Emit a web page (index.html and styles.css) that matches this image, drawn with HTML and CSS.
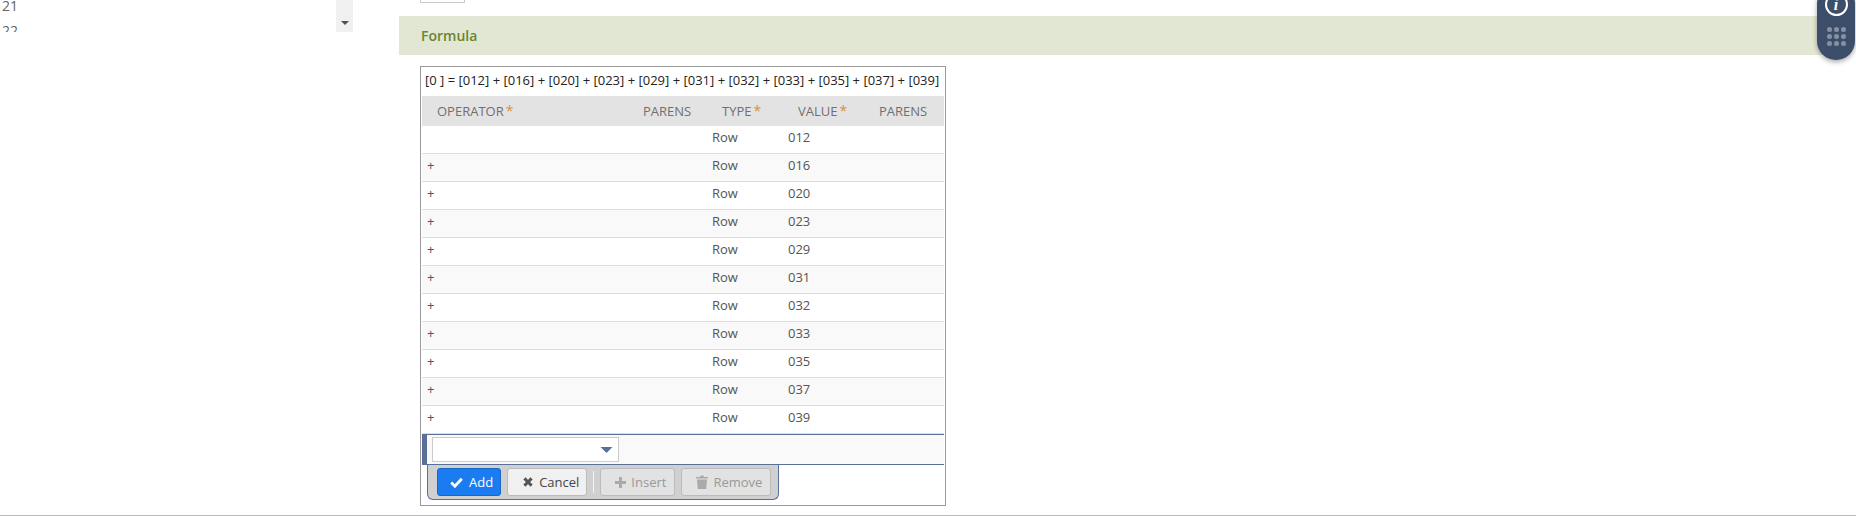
FILE: index.html
```html
<!DOCTYPE html>
<html lang="en">
<head>
<meta charset="utf-8">
<title>Formula</title>
<link rel="stylesheet" href="styles.css">
</head>
<body>
<div class="page">
  <aside class="side">
    <div class="lines">
      <div class="line-list"><div>21</div><div>22</div></div>
      <div class="scrollbar"><span class="scroll-arrow"></span></div>
    </div>
  </aside>
  <main class="main">
    <div class="stub"></div>
    <h2 class="section">Formula</h2>
    <div class="box">
      <div class="expr">[0 ] = [012] + [016] + [020] + [023] + [029] + [031] + [032] + [033] + [035] + [037] + [039]</div>
      <div class="row head">
        <div>OPERATOR<span class="req">*</span></div>
        <div>PARENS</div>
        <div>TYPE<span class="req">*</span></div>
        <div>VALUE<span class="req">*</span></div>
        <div>PARENS</div>
      </div>
      <div class="row"><div></div><div></div><div>Row</div><div>012</div><div></div></div>
      <div class="row"><div>+</div><div></div><div>Row</div><div>016</div><div></div></div>
      <div class="row"><div>+</div><div></div><div>Row</div><div>020</div><div></div></div>
      <div class="row"><div>+</div><div></div><div>Row</div><div>023</div><div></div></div>
      <div class="row"><div>+</div><div></div><div>Row</div><div>029</div><div></div></div>
      <div class="row"><div>+</div><div></div><div>Row</div><div>031</div><div></div></div>
      <div class="row"><div>+</div><div></div><div>Row</div><div>032</div><div></div></div>
      <div class="row"><div>+</div><div></div><div>Row</div><div>033</div><div></div></div>
      <div class="row"><div>+</div><div></div><div>Row</div><div>035</div><div></div></div>
      <div class="row"><div>+</div><div></div><div>Row</div><div>037</div><div></div></div>
      <div class="row"><div>+</div><div></div><div>Row</div><div>039</div><div></div></div>
      <div class="edit">
        <div class="select"><svg class="caret" width="13" height="6" viewBox="0 0 13 6"><path d="M0.5 0H12.5L7 5.6Q6.5 6 6 5.6Z"/></svg></div>
      </div>
      <div class="toolbar">
        <button class="btn primary">
          <svg class="ico" width="13" height="11" viewBox="0 0 13 11"><path d="M1.2 5.6L4.9 9.2L11.8 1.8" fill="none" stroke="currentColor" stroke-width="2.8"/></svg>
          <span>Add</span>
        </button>
        <button class="btn">
          <svg class="ico" width="10" height="10" viewBox="0 0 10 10"><path d="M1.4 1.4L8.6 8.6M8.6 1.4L1.4 8.6" fill="none" stroke="#555" stroke-width="2.9"/></svg>
          <span>Cancel</span>
        </button>
        <span class="sep"></span>
        <button class="btn off">
          <svg class="ico" width="11" height="11" viewBox="0 0 11 11"><path d="M5.5 0V11M0 5.5H11" fill="none" stroke="#aaa" stroke-width="3"/></svg>
          <span>Insert</span>
        </button>
        <button class="btn off">
          <svg class="ico" width="12" height="14" viewBox="0 0 12 14"><path d="M0 2H4L4.6 0.5H7.4L8 2H12V3.4H0ZM1 4.4H11L10.2 14H1.8Z" fill="#aaa"/></svg>
          <span>Remove</span>
        </button>
      </div>
    </div>
  </main>
</div>
<div class="widget">
  <div class="info"><span class="info-i">i</span></div>
  <div class="dots"><i></i><i></i><i></i><i></i><i></i><i></i><i></i><i></i><i></i></div>
</div>
</body>
</html>
```
FILE: styles.css
```css
html, body {
  margin: 0;
  padding: 0;
  background: #fff;
}
body {
  height: 516px;
  overflow: hidden;
  font-family: "Open Sans", sans-serif;
  font-size: 13px;
  color: #555;
}
.page {
  display: flex;
  height: 515px;
  border-bottom: 1px solid #bbb;
  overflow: hidden;
}
.side {
  flex: 0 0 399px;
}
.lines {
  display: flex;
  width: 353px;
  height: 32px;
  overflow: hidden;
}
.line-list {
  flex: 1;
  margin-top: -7px;
  padding-left: 2px;
  font-size: 14px;
  line-height: 25px;
  color: #666;
}
.scrollbar {
  flex: 0 0 17px;
  background: #f0f0f0;
  display: flex;
  justify-content: center;
  align-items: flex-end;
  padding-bottom: 7px;
  box-sizing: border-box;
}
.scroll-arrow {
  width: 0;
  height: 0;
  border-left: 4px solid transparent;
  border-right: 4px solid transparent;
  border-top: 4px solid #505050;
}
.main {
  flex: 1;
  min-width: 0;
  padding-right: 20px;
}
.stub {
  width: 43px;
  height: 2px;
  margin-left: 21px;
  border: 1px solid #ccc;
  border-top: 0;
}
.section {
  margin: 13px 0 11px;
  height: 39px;
  line-height: 39px;
  padding-left: 22px;
  background: #e2e7d3;
  color: #6b8431;
  font-size: 14px;
  font-weight: 600;
}
.box {
  width: 522px;
  height: 438px;
  margin-left: 21px;
  border: 1px solid #999;
  padding: 0 1px;
}
.expr {
  height: 29px;
  line-height: 27px;
  padding-left: 4px;
  margin-left: -1px;
  font-size: 13px;
  color: #222;
  white-space: nowrap;
}
.row {
  display: grid;
  grid-template-columns: 206px 79px 76px 81px 1fr;
  height: 28px;
  line-height: 22px;
  border-bottom: 1px solid #ddd;
  box-sizing: border-box;
}
.row > div {
  padding-left: 5px;
  white-space: nowrap;
}
.row:nth-child(even) {
  background: #f9f9f9;
}
.head,
.row.head:nth-child(even) {
  height: 30px;
  line-height: 30px;
  background: #e3e3e3;
  border-bottom: 0;
  color: #707070;
}
.row.head > div {
  padding-left: 15px;
}
.req {
  margin-left: 2px;
  color: #d8923a;
  font-size: 14px;
  line-height: 14px;
}
.edit {
  height: 31px;
  box-sizing: border-box;
  border-top: 1px solid #5a7099;
  border-bottom: 1px solid #5a7099;
  border-left: 5px solid #5a7099;
  background: #f9f9f9;
  padding: 2px 0 0 5px;
}
.select {
  display: flex;
  align-items: center;
  justify-content: flex-end;
  width: 187px;
  height: 25px;
  box-sizing: border-box;
  border: 1px solid #ccc;
  background: #fff;
  padding-right: 5px;
}
.caret {
  display: block;
  fill: #5a7099;
}
.toolbar {
  display: flex;
  align-items: flex-start;
  gap: 6px;
  width: 352px;
  height: 35px;
  margin-left: 5px;
  padding: 3px 0 0 9px;
  box-sizing: border-box;
  background: #d0d0d0;
  border: 1px solid #5a7099;
  border-top: 0;
  border-radius: 0 0 6px 6px;
}
.btn {
  display: flex;
  align-items: center;
  gap: 6px;
  height: 28px;
  padding: 0 7px 0 15px;
  box-sizing: border-box;
  border: 1px solid #bbb;
  border-radius: 3px;
  background: #f0f0f0;
  color: #444;
  font-family: "Open Sans", sans-serif;
  font-size: 13px;
}
.ico {
  display: block;
  flex: none;
}
.primary {
  padding: 0 7px 0 12px;
  background: #1a7cf0;
  border-color: #1668c8;
  color: #fff;
}
.off {
  gap: 5px;
  padding: 0 8px 0 14px;
  background: #e2e2e2;
  color: #999;
}
.sep {
  width: 1px;
  height: 22px;
  margin-top: 3px;
  background: #f4f4f4;
}
.widget {
  position: absolute;
  top: -15px;
  left: 1817px;
  width: 38px;
  height: 75px;
  border-radius: 19px;
  background: #3d4e6a;
  box-shadow: 0 2px 5px rgba(0, 0, 0, 0.35);
  display: flex;
  flex-direction: column;
  align-items: center;
}
.info {
  width: 23px;
  height: 23px;
  margin-top: 8px;
  border: 2px solid #fff;
  border-radius: 50%;
  box-sizing: border-box;
  display: flex;
  align-items: center;
  justify-content: center;
}
.info-i {
  color: #fff;
  font-family: "Liberation Serif", serif;
  font-style: italic;
  font-weight: 700;
  font-size: 16px;
  line-height: 16px;
}
.dots {
  display: grid;
  grid-template-columns: repeat(3, 5px);
  gap: 2px;
  margin-top: 11px;
}
.dots i {
  display: block;
  width: 5px;
  height: 5px;
  border-radius: 50%;
  background: #8791a4;
}
```
